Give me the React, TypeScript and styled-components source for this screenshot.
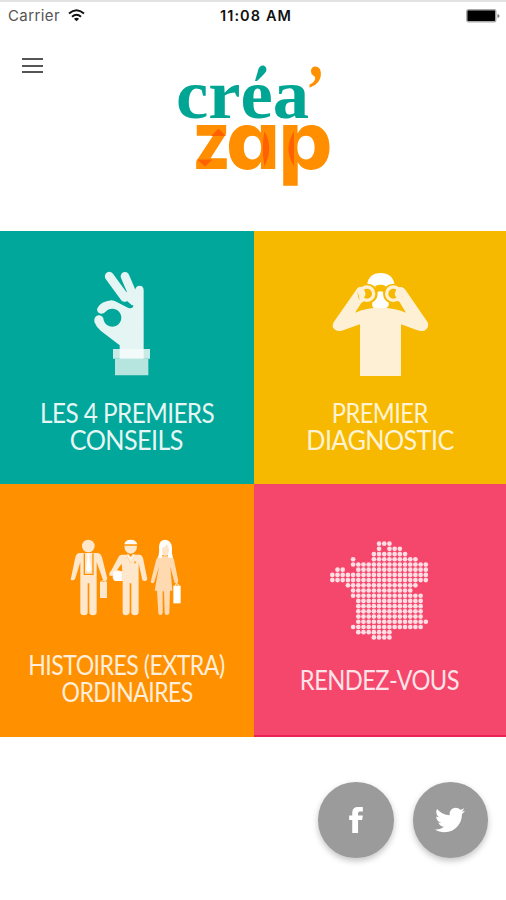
import React from "react";
import styled, { createGlobalStyle } from "styled-components";
import { FaTwitter } from "react-icons/fa";

const GlobalStyle = createGlobalStyle`
  * { box-sizing: border-box; }
  body { margin: 0; background: #fff; }
`;

const Screen = styled.main`
  width: 506px;
  height: 900px;
  display: flex;
  flex-direction: column;
  background: #fff;
  border-top: 2px solid #e2e2e2;
  overflow: hidden;
  font-family: Lato, "Liberation Sans", sans-serif;
`;

const StatusBar = styled.div`
  height: 27px;
  display: grid;
  grid-template-columns: 1fr auto 1fr;
  align-items: center;
  padding: 0 6px 0 8px;
  font: 400 15px/27px Inter, "Liberation Sans", sans-serif;
`;

const Carrier = styled.div`
  display: flex;
  align-items: center;
  gap: 8px;
  color: #555;
  letter-spacing: 0.4px;
`;

const Clock = styled.div`
  color: #111;
  font-weight: 600;
  font-size: 14.5px;
  letter-spacing: 1.1px;
  padding-left: 4px;
`;

const Battery = styled.svg`
  justify-self: end;
  display: block;
`;

const Header = styled.header`
  height: 202px;
  display: grid;
  grid-template-columns: 165px 180px 1fr;
  align-items: start;
`;

const MenuButton = styled.button`
  width: 21px;
  height: 15px;
  margin: 29px 0 0 22px;
  padding: 0;
  border: 0;
  background: none;
  display: flex;
  flex-direction: column;
  justify-content: space-between;
`;

const MenuLine = styled.span`
  height: 2px;
  background: #555;
`;

const Logo = styled.svg`
  display: block;
  margin-top: 26px;
`;

const Zap = styled.text`
  font-family: Inter, sans-serif;
  font-weight: 800;
  font-size: 80px;
  font-feature-settings: "cv11";
  fill: #ff8f00;
`;

const Crea = styled.text<{ $fill: string }>`
  font-family: "Liberation Serif", serif;
  font-weight: 700;
  font-size: 69px;
  fill: ${(p) => p.$fill};
`;

const Tiles = styled.section`
  display: grid;
  grid-template-columns: 253.5px 252.5px;
  grid-template-rows: 253px 253px;
`;

const Tile = styled.a<{ $bg: string; $ink: string; $edge?: string }>`
  display: flex;
  flex-direction: column;
  align-items: center;
  background: ${(p) => p.$bg};
  color: ${(p) => p.$ink};
  border-bottom: ${(p) => (p.$edge ? `2px solid ${p.$edge}` : "0")};
  text-decoration: none;
`;

const TileArt = styled.div<{ $top: number; $left?: number; $right?: number }>`
  height: 165px;
  flex: none;
  padding: ${(p) => `${p.$top}px ${p.$right ?? 0}px 0 ${p.$left ?? 0}px`};
  svg { display: block; }
`;

const TileLabel = styled.div<{ $top?: number }>`
  display: flex;
  flex-direction: column;
  align-items: center;
  margin-top: ${(p) => p.$top ?? 4}px;
`;

const LabelLine = styled.span<{ $scale: number }>`
  font-size: 26px;
  line-height: 26.6px;
  white-space: nowrap;
  letter-spacing: -0.6px;
  transform: scaleX(${(p) => p.$scale});
`;

const Footer = styled.footer`
  display: flex;
  justify-content: flex-end;
  gap: 19px;
  padding: 45px 18px 0 0;
`;

const SocialButton = styled.a`
  width: 75.5px;
  height: 75.5px;
  border-radius: 50%;
  background: #9b9b9b;
  color: #fff;
  display: flex;
  align-items: center;
  justify-content: center;
  box-shadow: 0 3px 6px rgba(0, 0, 0, 0.24);
`;

const OkHand = () => (
  <svg width="90" height="125" viewBox="0 0 270 375">
    <g stroke="#e4f5f3" strokeLinecap="round" fill="none">
      <path d="M88 49 L134 112" strokeWidth="27" />
      <path d="M135 49 L158 103" strokeWidth="26" />
    </g>
    <path
      fill="#e4f5f3"
      d="M165 90 Q168 77 179 77 Q191 77 191 92 L191 267 L119 267 L119 256 L63 213 Q48 200 43 186 Q41 169 55 166 Q65 164 70 174 A27 27 0 1 0 77 155 Q68 164 58 160 Q49 154 52 145 Q62 124 94 121 Q105 121 114 127 L145 143 Q157 148 158 138 L127 110 L145 90 L159 111 Z"
    />
    <path d="M100 117 L143 139 Q153 144 157 138" fill="none" stroke="#00a79a" strokeWidth="6" strokeLinecap="round" />
    <path fill="#b6e4df" d="M105 296 H205 V346 H105Z" />
    <path fill="#c8ebe7" d="M99 267 H210 V296 H99Z" />
    <path fill="#f3fbfa" d="M119 267 H191 V296 H119Z" />
  </svg>
);

const Lookout = () => (
  <svg width="120" height="125" viewBox="0 0 360 375">
    <path fill="#fff" d="M141 75 Q146 39 182 39 Q218 39 224 75 L200 86 L206 128 Q209 139 197 145 H164 Q154 140 157 128 L164 86Z" />
    <path
      fill="#fdf0d5"
      d="M112 85 Q125 75 136 88 L133 115 L105 158 Q139 143 180 143 Q223 143 258 158 L232 115 L230 87 Q243 76 255 88 L323 187 Q329 204 313 212 Q304 215 288 209 L243 193 V348 H120 V193 L65 212 Q47 216 38 201 Q36 193 42 185Z"
    />
    <g fill="#f7b900">
      <circle cx="143" cy="101" r="30" />
      <circle cx="219" cy="101" r="30" />
      <path d="M166 78 Q181 71 197 78 V101 Q181 87 166 101Z" />
    </g>
    <path fill="#fdf0d5" d="M111 86 Q124 76 132 84 V124 L122 130Z M231 84 Q243 76 254 87 L244 127 L231 123Z" />
    <g fill="#f7b900" stroke="#fdf0d5" strokeWidth="10">
      <circle cx="141" cy="101" r="20" />
      <circle cx="220" cy="101" r="20" />
    </g>
    <path d="M124 88 H131 Q142 101 131 114 H124Z M237 88 H230 Q219 101 230 114 H237Z" fill="#fdf0d5" />
  </svg>
);

const People = () => (
  <svg width="135" height="95" viewBox="0 0 405 285">
    <g fill="#ffe7cc">
      <circle cx="88" cy="48" r="19" />
      <path d="M63 69 H114 Q125 69 129 82 L145 146 Q143 155 133 152 L113 96 V246 Q113 256 102 256 Q91 256 91 247 V160 H86 V247 Q86 256 75 256 Q64 256 64 246 V96 L49 145 Q45 154 35 149 L49 82 Q52 69 63 69Z" />
      <path d="M123 155 H144 V204 H123Z" />
    </g>
    <path d="M76 70 V133 H102 V70" fill="none" stroke="#ff9100" strokeWidth="4" />
    <path d="M83 71 H94 L91 80 L97 119 L89 127 L81 119 L86 80Z" fill="#fff" />
    <path d="M127 155 Q133 146 140 155" fill="none" stroke="#ffe7cc" strokeWidth="3" />
    <g fill="#ffe7cc">
      <path d="M196 47 H234 Q234 69 215 71 Q196 69 196 47Z" />
      <path fillRule="evenodd" d="M187 74 H202 L215 99 L228 74 H243 Q250 76 252 84 L265 148 Q261 157 250 151 L239 98 V247 Q238 256 228 256 Q217 256 217 247 V160 H212 V247 Q210 256 201 256 Q191 256 191 247 V153 H170 Q160 151 161 137 H152 Q148 129 156 123 L178 82 Q181 75 187 74Z M188 101 L174 120 L190 124Z" />
    </g>
    <path d="M202 74 L215 98 L229 74 L222 72 L215 81 L208 72Z" fill="#fff0df" />
    <path d="M196 43 Q198 29 215 29 Q232 29 235 43Z M163 123 L188 125 V153 H168 Q161 148 163 123Z" fill="#fff" />
    <circle cx="228" cy="97" r="3.5" fill="#ffab42" />
    <g fill="#ffd9b0">
      <path d="M304 79 H335 Q343 80 345 89 L358 153 Q357 162 347 159 L334 110 L340 182 H333 L331 250 Q329 256 322 255 Q317 254 317 248 L315 184 H311 V248 Q310 256 303 255 Q298 254 298 248 L294 182 H287 L300 110 L286 156 Q280 164 275 155 L292 88 Q295 80 304 79Z" />
    </g>
    <path d="M296 83 Q302 72 300 51 Q301 29 319 29 Q337 30 339 54 Q337 72 342 83 H327 V76 H309 V83Z" fill="#fff" />
    <path d="M309 55 Q321 49 324 42 L330 57 Q330 76 318 78 Q308 76 309 55Z" fill="#ffe4c7" />
    <path d="M343 167 H365 V220 H343Z" fill="#fff" />
    <path d="M349 167 Q353 154 359 167" fill="none" stroke="#fff" strokeWidth="3" />
  </svg>
);

/* Filled column ranges of the dotted map, one list per row. */
const MAP_ROWS: [number, number][][] = [
  [[9, 11]],
  [[9, 9], [11, 13]],
  [[8, 14]],
  [[4, 4], [8, 16]],
  [[4, 18]],
  [[1, 2], [5, 18]],
  [[0, 18]],
  [[0, 18]],
  [[3, 16]],
  [[4, 15]],
  [[4, 17]],
  [[5, 17]],
  [[5, 17]],
  [[5, 17]],
  [[5, 17]],
  [[5, 18]],
  [[4, 17]],
  [[5, 11]],
  [[8, 11]],
];

const FranceMap = () => (
  <svg width="120" height="120" viewBox="0 0 360 360" fill="#ffdfe5">
    {MAP_ROWS.flatMap((ranges, row) =>
      ranges.flatMap(([from, to]) =>
        Array.from({ length: to - from + 1 }, (_, i) => (
          <circle key={`${row}-${from + i}`} cx={37 + (from + i) * 15.58} cy={41 + row * 15.62} r="7" />
        ))
      )
    )}
  </svg>
);

export default function App() {
  return (
    <Screen>
      <GlobalStyle />
      <StatusBar>
        <Carrier>
          Carrier
          <svg width="17" height="13" viewBox="0 0 17 13" fill="none" stroke="#111" strokeWidth="2">
            <path d="M1 4.6 Q8.5 -2 16 4.6 M4 7.8 Q8.5 3.8 13 7.8" />
            <path d="M8.5 12.3 L5.9 9.7 Q8.5 7.6 11.1 9.7Z" fill="#111" stroke="none" />
          </svg>
        </Carrier>
        <Clock>11:08 AM</Clock>
        <Battery width="34" height="14" viewBox="0 0 34 14">
          <rect x="0.8" y="0.8" width="29" height="12" rx="1.5" fill="#000" stroke="#aaa" strokeWidth="1.4" />
          <path d="M31.5 5 Q33.5 5.5 33.5 7 Q33.5 8.5 31.5 9Z" fill="#777" />
        </Battery>
      </StatusBar>
      <Header>
        <MenuButton aria-label="Menu">
          <MenuLine />
          <MenuLine />
          <MenuLine />
        </MenuButton>
        <Logo width="180" height="140" viewBox="0 0 180 140">
          <defs>
            <clipPath id="below-accent">
              <rect x="0" y="28.5" width="180" height="60" />
            </clipPath>
          </defs>
          <g clipPath="url(#below-accent)">
            <Crea $fill="#00a693" x="11" y="62.5" textLength="133" lengthAdjust="spacingAndGlyphs">
              créa
            </Crea>
          </g>
          <path fill="#00a693" d="M90 26 L93.5 14 Q95 10 98.5 10.5 Q102.5 12 101 16.5 Q100 18.5 92 26Z" />
          <Crea $fill="#ff9100" x="141" y="58" textLength="19" lengthAdjust="spacingAndGlyphs">
            ’
          </Crea>
          <Zap y="114">
            <tspan x="27.5" textLength="38" lengthAdjust="spacingAndGlyphs">z</tspan>
            <tspan x="61" textLength="54" lengthAdjust="spacingAndGlyphs">a</tspan>
            <tspan x="113.5" textLength="54" lengthAdjust="spacingAndGlyphs">p</tspan>
          </Zap>
          <g fill="#ff6000">
            <path d="M53.5 73.5 L61 81 H46Z M32 104.5 H47.500 L40 111.5Z" />
            <path d="M99.5 76 Q109 93 99.5 111 Q96 93 99.5 76Z M129 76 V111 Q118 94 129 76Z" />
          </g>
        </Logo>
      </Header>
      <Tiles>
        <Tile $bg="#00a79a" $ink="#e6f6f4">
          <TileArt $top={29} $right={3.5}><OkHand /></TileArt>
          <TileLabel>
            <LabelLine $scale={0.935}>LES 4 PREMIERS</LabelLine>
            <LabelLine $scale={0.97}>CONSEILS</LabelLine>
          </TileLabel>
        </Tile>
        <Tile $bg="#f7b900" $ink="#fff3d4">
          <TileArt $top={29}><Lookout /></TileArt>
          <TileLabel>
            <LabelLine $scale={0.91}>PREMIER</LabelLine>
            <LabelLine $scale={0.97}>DIAGNOSTIC</LabelLine>
          </TileLabel>
        </Tile>
        <Tile $bg="#ff9100" $ink="#ffeedb">
          <TileArt $top={46}><People /></TileArt>
          <TileLabel $top={3}>
            <LabelLine $scale={0.89}>HISTOIRES (EXTRA)</LabelLine>
            <LabelLine $scale={0.885}>ORDINAIRES</LabelLine>
          </TileLabel>
        </Tile>
        <Tile $bg="#f5476b" $ink="#ffe3e8" $edge="#ea2456">
          <TileArt $top={46}><FranceMap /></TileArt>
          <TileLabel $top={18}>
            <LabelLine $scale={0.91}>RENDEZ-VOUS</LabelLine>
          </TileLabel>
        </Tile>
      </Tiles>
      <Footer>
        <SocialButton aria-label="Facebook">
          <svg width="14" height="26" viewBox="0 0 40 76" fill="#fff">
            <path d="M9 76 V38 H0 V25 H9 V17 Q9 0 26 0 H40 V13 H31 Q26 13 26 18 V25 H40 L38 38 H26 V76Z" />
          </svg>
        </SocialButton>
        <SocialButton aria-label="Twitter">
          <FaTwitter size={30} />
        </SocialButton>
      </Footer>
    </Screen>
  );
}
